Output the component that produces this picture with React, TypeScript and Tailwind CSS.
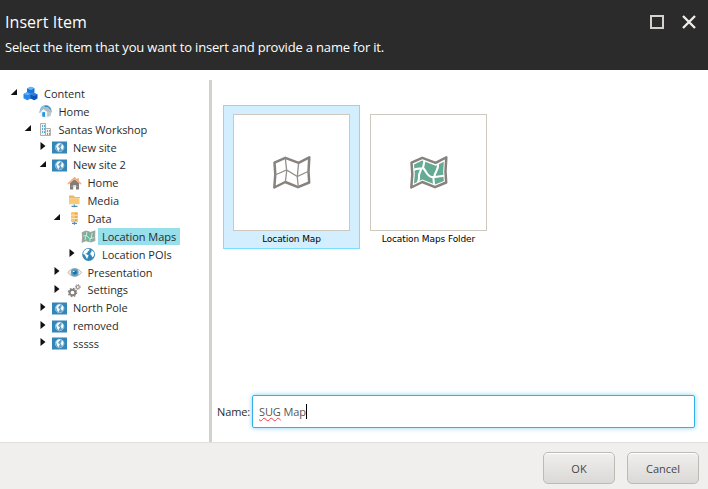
import type { ReactNode } from "react";

type IconName = "cubes" | "home" | "building" | "site" | "house" | "media" | "data" | "map" | "globe" | "eye" | "gears";

function FoldedMap({ filled = false }: { filled?: boolean }) {
  return (
    <svg viewBox="0 0 40 36" className="mt-px h-9 w-10" fill="none">
      {filled && (
        <>
          <path d="M5 9.4 13.2 5.6 26.7 10.7 34.8 6.7 34.2 17 34.8 26 26 29.6 13.3 24.5 5 28.5 5.8 19Z" fill="#65ab94" />
          <path d="M4.5 15.2C8 12.5 11 14.5 14 13L15.6 5M14 13c2.5 1.2 3.5 8.2 8.5 9 4 .3 8-1 13-1.3M25.5 21c.1-4 4.5-6 3.5-12.5M24.3 22l.8 8.5M12.2 14 10 20v3.5l-1 4" stroke="#fff" strokeWidth="2.1" />
        </>
      )}
      <path d="M2.5 7.6 13.3 2.8 26.6 7.8 37.3 2.4 36.5 16.5 37.2 27.5 26 32.2 13.3 27 2.3 32.5 3.3 19.5Z" stroke="#87827d" strokeWidth="2.5" strokeLinejoin="round" />
      {!filled && <path d="m13.3 3 1.4 13-1.4 11M26.6 8l-1.3 14 1 10M3 20l11.7-5 10.6 6.5L37 16" stroke="#938e89" strokeWidth="1.3" />}
    </svg>
  );
}

const icons: Record<IconName, ReactNode> = {
  cubes: (
    <>
      <path d="m4 2.5 3.8-1.8 3.7 1.6v4.2L7.7 8.2 4 6.5z" fill="#1976df" />
      <path d="m4 2.5 3.8-1.8 3.7 1.6-3.7 1.6z" fill="#6db5fa" />
      <path d="M.5 8 3.8 6.2l4 1.5v4.8l-3.5 1.8-3.8-2z" fill="#2488ed" />
      <path d="m.5 8 3.3-1.8 4 1.5-3.3 1.5z" fill="#64adf7" />
      <path d="m7.3 8.7 3.4-2 3.8 1.8v4l-3.3 1.8-3.9-1.7z" fill="#0d54b6" />
      <path d="m7.3 8.7 3.4-2 3.8 1.8-3.3 1.5z" fill="#347fdc" />
    </>
  ),
  home: (
    <>
      <circle cx="7.7" cy="7" r="6" fill="#81bde5" />
      <path d="m6.5 1.5 3.3.3 2.5 2.2 1.2 4L11 6.2 7.5 3z" fill="#268bca" />
      <path d="M2 7.5 5.3 5l4.2 2.7v5.5L2 12z" fill="#f3f4f5" />
      <path d="m9.5 7.7 3.3-.9.2 4.8-3.5 1.6z" fill="#c1c9cf" />
      <path d="m.7 8.2 4.5-4.6 4.7-.5 4 4.2-3.7 1-4.8-3.6-3.5 4.2z" fill="#b3bbc5" />
      <path d="M4.2 8.2 7 8v5l-2.8-.5z" fill="#2797dd" />
    </>
  ),
  building: (
    <>
      <path d="M2.5 1.5h5v12h-5zM7.5 6.5h5v7h-5z" fill="#f1f3f3" stroke="#b1afac" />
      <path d="M4 3h1v2H4zm2 0h1v2H6zM4 6h1v2H4zm2 0h1v2H6zM4 9h1v2H4zm2 0h1v2H6zm3-1h1v2H9zm2 0h1v2h-1zm-2 3h1v2H9zm2 0h1v2h-1z" fill="#5babd1" />
    </>
  ),
  site: (
    <>
      <path d="M0 1.5h15v12H0z" fill="#3386b8" />
      <circle cx="7.6" cy="7.5" r="4.3" fill="#5a9fc8" stroke="#a9cce1" strokeWidth=".8" />
      <path d="M4 6.3 5.5 4l2.3-.8.8.7-1.7 1.3-.5 1.4-1.1.3 1.8.7.8 1.1-.8 1-.4 1.6L5 9.2 4.6 7.5zM9.4 4.2l1.5.7.7 2-.7 2.2-1 .9-.7-1.7-.8-1L9.6 6z" fill="#fff" />
    </>
  ),
  house: (
    <>
      <path d="M3 7 7.5 3.2 12 7v6.5H9V9.3H6.2v4.2H3z" fill="#827d78" />
      <path d="M4 10.2h7" stroke="#bdb9b3" strokeWidth=".6" />
      <path d="m1 8 6.5-6L14 8M11 2.3V5" fill="none" stroke="#f3aa82" strokeWidth="1.7" />
    </>
  ),
  media: (
    <>
      <path d="M2 1.5h4.5L8 3h5v1H2z" fill="#e9b965" />
      <path d="M2 4.2h10.5v6H2z" fill="#fac976" />
      <path d="M7.3 10.5v2.8M4.5 12.3h6" stroke="#4b91b9" strokeWidth="1.2" />
    </>
  ),
  data: (
    <>
      <rect x="4" y="1" width="7" height="10" rx="1" fill="#f7c570" />
      <path d="M4 4.2h7M4 7.5h7" stroke="#fff" strokeWidth=".5" />
      <path d="M8 2.7h2M8 6h2M8 9.2h2" stroke="#b98e4d" strokeWidth=".7" />
      <path d="M7.5 11v2.7M5 12.4h5" stroke="#4b91b9" strokeWidth="1.2" />
    </>
  ),
  map: (
    <>
      <path d="m1.3 3.6 3.8-1.4 4.7 1.4 4-1.5-.2 5.7.2 3.8-4.2 1.3-4.5-1.3-3.9 1.5.4-4.5z" fill="#72b39d" stroke="#a5a39d" strokeWidth="1.1" />
      <path d="m2.2 7 3.3-.5L5.8 3M5.5 6.5l3.2 3 4.2-.7M10.2 9l1-5M9 9.5v3M5 7 4 11" fill="none" stroke="#edf5f0" strokeWidth=".8" />
    </>
  ),
  globe: (
    <>
      <circle cx="7.6" cy="7.5" r="6.4" fill="#3386b8" />
      <path d="m2 7 1-3L5.5 2 8 1.8l.6 1.3-1.8 1.3-.7 1.8-2 .4 1.8.8 1.8 1-.8 1.7-.8 2L5 10.3 3.8 7.7zM10.3 3.3l1.6.7 1.3 2-.4 3-1.4 1.6-.8-2-1.4-1.3.4-1.5 1-1z" fill="#fff" />
    </>
  ),
  eye: (
    <>
      <path d="M1 7.5C4 2.3 11.5 2.3 14.5 7.5 11.5 12.5 4 12.5 1 7.5z" fill="#efeeec" stroke="#bbb7b1" />
      <circle cx="7.7" cy="7.5" r="3.9" fill="#5c9fc3" />
      <circle cx="7.7" cy="7.5" r="2" fill="#136fa6" />
      <circle cx="6.8" cy="6.5" r=".8" fill="#fff" />
    </>
  ),
  gears: (
    <>
      <circle cx="5.5" cy="9.5" r="2.8" fill="none" stroke="#85807b" strokeWidth="1.9" />
      <circle cx="5.5" cy="9.5" r="4.1" fill="none" stroke="#85807b" strokeWidth="1.3" strokeDasharray="1.6 1.62" />
      <circle cx="10.8" cy="4" r="1.5" fill="none" stroke="#918c87" strokeWidth="1.2" />
      <circle cx="10.8" cy="4" r="2.5" fill="none" stroke="#918c87" strokeDasharray="1 .96" />
    </>
  ),
};

const rows: { depth: string; label: string; icon: IconName; open?: boolean; selected?: boolean }[] = [
  { depth: "pl-2", label: "Content", icon: "cubes", open: true },
  { depth: "pl-[22.5px]", label: "Home", icon: "home" },
  { depth: "pl-[22.5px]", label: "Santas Workshop", icon: "building", open: true },
  { depth: "pl-[37px]", label: "New site", icon: "site", open: false },
  { depth: "pl-[37px]", label: "New site 2", icon: "site", open: true },
  { depth: "pl-[51.5px]", label: "Home", icon: "house" },
  { depth: "pl-[51.5px]", label: "Media", icon: "media" },
  { depth: "pl-[51.5px]", label: "Data", icon: "data", open: true },
  { depth: "pl-[66px]", label: "Location Maps", icon: "map", selected: true },
  { depth: "pl-[66px]", label: "Location POIs", icon: "globe", open: false },
  { depth: "pl-[51.5px]", label: "Presentation", icon: "eye", open: false },
  { depth: "pl-[51.5px]", label: "Settings", icon: "gears", open: false },
  { depth: "pl-[37px]", label: "North Pole", icon: "site", open: false },
  { depth: "pl-[37px]", label: "removed", icon: "site", open: false },
  { depth: "pl-[37px]", label: "sssss", icon: "site", open: false },
];

function Tile({ label, filled = false }: { label: string; filled?: boolean }) {
  return (
    <div className={`flex h-36 w-[137px] flex-col items-center border pt-2 ${filled ? "border-transparent" : "border-[#7bdffb] bg-[#d3efff]"}`}>
      <div className="flex h-[117px] w-[117px] shrink-0 items-center justify-center border border-[#cdc9c1] bg-white">
        <FoldedMap filled={filled} />
      </div>
      <span className="mt-px font-['DejaVu_Sans',sans-serif] text-[9px] leading-[14px] tracking-[-0.1px] whitespace-nowrap text-black">{label}</span>
    </div>
  );
}

export default function App() {
  const button = "h-8 w-18 rounded-[5px] border border-[#bdbab3] bg-linear-to-b from-[#f0efee] to-[#dad9d6] pt-0.5 text-[11px] text-[#474747] shadow-[inset_0_1px_0_#fff]";
  return (
    <div className="flex h-[489px] w-[708px] flex-col overflow-hidden bg-white font-['Open_Sans',sans-serif] text-[11px] text-[#2b2b2b]">
      <header className="flex h-[70px] shrink-0 justify-between bg-[#2b2b2b] pl-[5px] text-white">
        <div className="pt-3">
          <h1 className="text-base leading-5 tracking-[0.05px]">Insert Item</h1>
          <p className="mt-[5px] text-[13px] leading-5 tracking-[-0.175px] whitespace-nowrap">Select the item that you want to insert and provide a name for it.</p>
        </div>
        <div className="flex gap-[18px] pt-[15px] pr-3">
          <span className="h-3.5 w-3.5 border-2 border-[#d5d1cc]" />
          <svg className="h-3.5 w-3.5" viewBox="0 0 14 14"><path d="m1 1 12 12M13 1 1 13" stroke="#eeece5" strokeWidth="2.4" /></svg>
        </div>
      </header>
      <main className="flex h-[372px] shrink-0">
        <nav className="flex w-[209px] shrink-0 flex-col pt-[14.5px]">
          {rows.map((row, i) => (
            <div key={i} className={`flex h-[17.86px] shrink-0 items-center ${row.depth}`}>
              <span className="flex w-[15px] shrink-0 pl-[1.5px]">
                {row.open !== undefined && (
                  <svg className="-mt-0.5 h-2 w-2" viewBox="0 0 8 8"><path d={row.open ? "M7 1v6H.7z" : "M1.5 0 6.5 4l-5 4z"} fill="#111" /></svg>
                )}
              </span>
              <svg className="mt-px h-[15px] w-[15px] shrink-0" viewBox="0 0 15 15">{icons[row.icon]}</svg>
              <span className={`ml-0.5 px-1 leading-[17px] tracking-[-0.04px] whitespace-nowrap ${row.selected ? "bg-[#96dfeb]" : ""}`}>{row.label}</span>
            </div>
          ))}
        </nav>
        <div className="mt-2.5 w-[3px] shrink-0 bg-[#d2d2cd]" />
        <section className="flex flex-1 flex-col">
          <div className="flex flex-1 pt-[35px] pl-[11px]">
            <Tile label="Location Map" />
            <Tile label="Location Maps Folder" filled />
          </div>
          <div className="mb-3.5 flex items-center pr-[13px] pl-[5px]">
            <label className="w-[35px] shrink-0 pt-0.5 tracking-[-0.1px] whitespace-nowrap">Name:</label>
            <div className="flex h-[33px] flex-1 items-center rounded-[2px] border border-[#36afe9] pl-1.5 text-[#555] shadow-[0_0_5px_#8bd0f3]">
              <span className="pt-0.5 tracking-[-0.1px] underline decoration-[#f53b3b] decoration-wavy decoration-[0.8px] underline-offset-1">SUG</span>
              <span className="pt-0.5 tracking-[-0.1px] whitespace-pre"> Map</span>
              <span className="h-[15px] w-px bg-black" />
            </div>
          </div>
        </section>
      </main>
      <footer className="flex flex-1 justify-end gap-3 border-t border-[#dfdfde] bg-[#f0efee] pt-[9px] pr-[9px]">
        <button className={button}>OK</button>
        <button className={button}>Cancel</button>
      </footer>
    </div>
  );
}
